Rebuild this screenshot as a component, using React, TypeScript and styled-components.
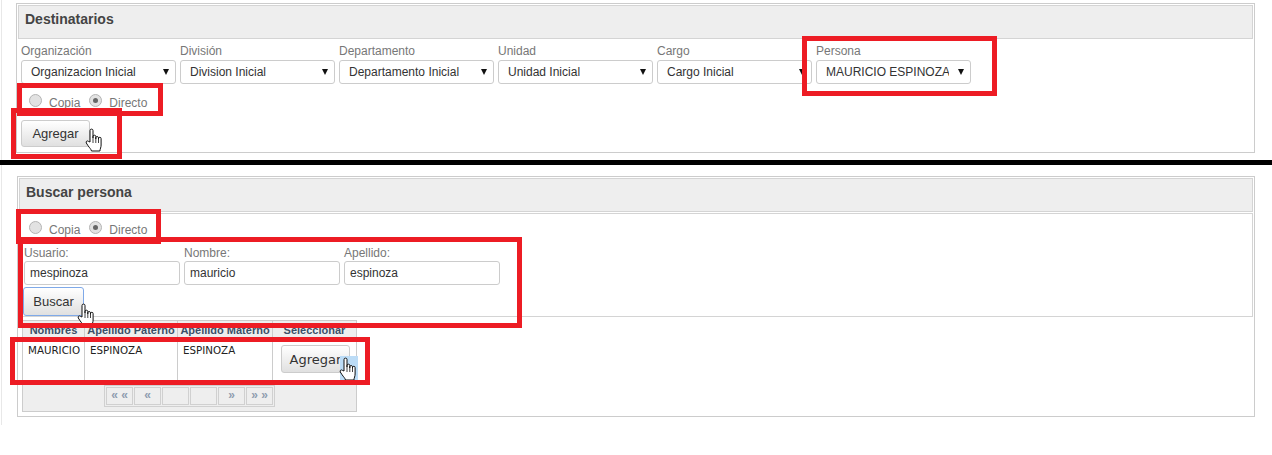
import React from 'react'
import styled, { createGlobalStyle } from 'styled-components'

const GlobalStyle = createGlobalStyle`
  body {
    margin: 0;
    background: #ffffff;
    font-family: "Liberation Sans", Arial, sans-serif;
  }
`

const Page = styled.div`
  position: relative;
  width: 1272px;
  height: 455px;
  overflow: hidden;
`

const Sheet = styled.div`
  margin-left: 1px;
  height: 425px;
  border-left: 1px solid #e8e8e8;
  padding: 3px 17px 0 14px;
  box-sizing: border-box;
`

const Panel = styled.section<{ $height: number; $top?: number; $left?: number }>`
  box-sizing: border-box;
  height: ${(p) => p.$height}px;
  margin: ${(p) => p.$top || 0}px 0 0 ${(p) => p.$left || 0}px;
  border: 1px solid #cccccc;
  padding: 1px;
`

const PanelHeader = styled.h2`
  box-sizing: border-box;
  height: 34px;
  margin: 0;
  padding: 5px 6px 0;
  background: #eeeeee;
  border: 1px solid #d4d4d4;
  font-size: 14px;
  line-height: 16px;
  font-weight: bold;
  color: #444444;
`

const SelectRow = styled.div`
  display: flex;
  gap: 4px;
  padding: 4px 0 0 3px;
`

const Field = styled.label<{ $line: number; $width: number }>`
  display: flex;
  flex-direction: column;
  width: ${(p) => p.$width}px;
  font-size: 12px;
  line-height: ${(p) => p.$line}px;
  color: #777777;
`

const Select = styled.div`
  box-sizing: border-box;
  display: flex;
  align-items: center;
  justify-content: space-between;
  height: 24px;
  padding: 0 6px 0 9px;
  background: #ffffff;
  border: 1px solid #cccccc;
  border-radius: 3px;
  font-size: 12px;
  color: #333333;
  white-space: nowrap;
  overflow: hidden;
`

const SelectValue = styled.span`
  max-width: 123px;
  overflow: hidden;
`

const Arrow = styled.span`
  width: 0;
  height: 0;
  flex: none;
  margin-bottom: 1px;
  border-left: 3.5px solid transparent;
  border-right: 3.5px solid transparent;
  border-top: 6px solid #111111;
`

const RadioRow = styled.div<{ $top: number; $left: number }>`
  display: flex;
  align-items: center;
  height: 16px;
  margin: ${(p) => p.$top}px 0 0 ${(p) => p.$left}px;
  font-size: 12px;
  color: #777777;
`

const Radio = styled.span<{ $checked?: boolean }>`
  box-sizing: border-box;
  display: flex;
  align-items: center;
  justify-content: center;
  width: 13px;
  height: 13px;
  margin-top: -6px;
  border: 1px solid #b4b4b4;
  border-radius: 50%;
  background: #e2e2e2;

  &::after {
    content: '';
    display: ${(p) => (p.$checked ? 'block' : 'none')};
    width: 5px;
    height: 5px;
    border-radius: 50%;
    background: #666666;
  }
`

const RadioText = styled.span<{ $after: number }>`
  margin: 0 ${(p) => p.$after}px 0 7px;
`

const Button = styled.button<{ $focus?: boolean }>`
  display: block;
  box-sizing: border-box;
  padding: 0;
  background: linear-gradient(to bottom, #ffffff, #e0e0e0);
  border: 1px solid ${(p) => (p.$focus ? '#7fa9e8' : '#cccccc')};
  border-radius: 3px;
  font-family: inherit;
  font-size: 13px;
  color: #333333;
`

const AddButton = styled(Button)`
  width: 69px;
  height: 27px;
  margin: 9px 0 0 3px;
`

const RowButton = styled(Button)`
  width: 69px;
  height: 28px;
`

const SearchButton = styled(Button)`
  width: 61px;
  height: 29px;
  margin: 2px 0 0 -1px;
`

const SearchBox = styled.div`
  box-sizing: border-box;
  height: 104px;
  margin-top: 1px;
  padding: 0 0 0 4px;
  border: 1px solid #d4d4d4;
`

const InputRow = styled.div`
  display: flex;
  gap: 4px;
  margin-top: 7px;
`

const TextInput = styled.div`
  box-sizing: border-box;
  height: 24px;
  padding: 0 5px;
  background: #ffffff;
  border: 1px solid #cccccc;
  border-radius: 3px;
  font-size: 12px;
  line-height: 22px;
  color: #333333;
`

const Grid = styled.div`
  box-sizing: border-box;
  width: 335px;
  height: 92px;
  margin: 3px 0 0 3px;
  background: #eeeeee;
  border: 1px solid #cccccc;
`

const GridRow = styled.div<{ $head?: boolean }>`
  display: grid;
  grid-template-columns: 62px 93px 95px 83px;
  height: ${(p) => (p.$head ? 17 : 45)}px;
  background: ${(p) => (p.$head ? '#eeeeee' : '#ffffff')};
`

const HeadCell = styled.div`
  box-sizing: border-box;
  border-right: 1px solid #cccccc;
  border-bottom: 1px solid #cccccc;
  font-size: 11px;
  line-height: 18px;
  font-weight: bold;
  color: #3a5068;
  text-align: center;
  white-space: nowrap;
  overflow: hidden;

  &:last-child {
    border-right: none;
  }
`

const Cell = styled.div`
  box-sizing: border-box;
  padding: 6px 0 0 5px;
  border-right: 1px solid #cccccc;
  font-family: "DejaVu Sans", Verdana, sans-serif;
  font-size: 10.3px;
  color: #222222;

  &:last-child {
    border-right: none;
    padding: 7px 0 0 8px;
  }
`

const Pager = styled.div`
  display: flex;
  gap: 1px;
  width: fit-content;
  margin: 2px 0 0 81px;
  padding: 1px;
  border: 1px solid #d0d0d0;
`

const PagerButton = styled.span`
  box-sizing: border-box;
  width: 27px;
  height: 18px;
  border: 1px solid #d0d0d0;
  font-size: 12px;
  font-weight: bold;
  line-height: 15px;
  text-align: center;
  color: #8f9db0;
`

const Divider = styled.div`
  position: absolute;
  left: 0;
  top: 160px;
  width: 1272px;
  height: 5px;
  background: #000000;
`

const RedBox = styled.div<{ $x: number; $y: number; $w: number; $h: number }>`
  position: absolute;
  box-sizing: border-box;
  left: ${(p) => p.$x}px;
  top: ${(p) => p.$y}px;
  width: ${(p) => p.$w}px;
  height: ${(p) => p.$h}px;
  border: 5px solid #ed1c24;
`

const HoverPatch = styled.div`
  position: absolute;
  left: 340px;
  top: 356px;
  width: 18px;
  height: 24px;
  background: #bcdcf6;
`

const CursorWrap = styled.svg<{ $x: number; $y: number }>`
  position: absolute;
  left: ${(p) => p.$x}px;
  top: ${(p) => p.$y}px;
`

const Cursor = ({ x, y }: { x: number; y: number }) => (
  <CursorWrap $x={x} $y={y} width='18' height='24' viewBox='0 0 18 24'>
    <path
      d='M5 14V2.6a1.5 1.5 0 0 1 3 0V10V8.6a1.4 1.4 0 0 1 2.8 0V11V9.6a1.4 1.4 0 0 1 2.7 0V11.5V10.6a1.3 1.3 0 0 1 2.6 0V17c0 2.5-1 3.6-1.2 6H6.5c-.4-1.8-2-3.2-3.4-5.2L1.3 15c-.8-1.5 1-2.8 2.2-1.6z'
      fill='#ffffff'
      stroke='#111111'
      strokeWidth='1'
      strokeLinejoin='round'
    />
    <path d='M8 10v5M10.8 11v4M13.5 11.5v3.5' stroke='#111111' strokeWidth='0.8' fill='none' />
  </CursorWrap>
)

const selects = [
  ['Organización', 'Organizacion Inicial'],
  ['División', 'Division Inicial'],
  ['Departamento', 'Departamento Inicial'],
  ['Unidad', 'Unidad Inicial'],
  ['Cargo', 'Cargo Inicial'],
  ['Persona', 'MAURICIO ESPINOZA'],
]

const searchFields = [
  ['Usuario:', 'mespinoza'],
  ['Nombre:', 'mauricio'],
  ['Apellido:', 'espinoza'],
]

const columns = ['Nombres', 'Apellido Paterno', 'Apellido Materno', 'Seleccionar']
const pagerLabels = ['« «', '«', '', '', '»', '» »']

const App = () => (
  <Page>
    <GlobalStyle />
    <Sheet>
      <Panel $height={150}>
        <PanelHeader>Destinatarios</PanelHeader>
        <SelectRow>
          {selects.map(([label, value]) => (
            <Field key={label} $line={17} $width={155}>
              {label}
              <Select>
                <SelectValue>{value}</SelectValue>
                <Arrow />
              </Select>
            </Field>
          ))}
        </SelectRow>
        <RadioRow $top={11} $left={11}>
          <Radio />
          <RadioText $after={9}>Copia</RadioText>
          <Radio $checked />
          <RadioText $after={0}>Directo</RadioText>
        </RadioRow>
        <AddButton>Agregar</AddButton>
      </Panel>
      <Panel $height={241} $top={23} $left={1}>
        <PanelHeader>Buscar persona</PanelHeader>
        <SearchBox>
          <RadioRow $top={8} $left={5}>
            <Radio />
            <RadioText $after={9}>Copia</RadioText>
            <Radio $checked />
            <RadioText $after={0}>Directo</RadioText>
          </RadioRow>
          <InputRow>
            {searchFields.map(([label, value]) => (
              <Field key={label} $line={16} $width={156}>
                {label}
                <TextInput>{value}</TextInput>
              </Field>
            ))}
          </InputRow>
          <SearchButton $focus>Buscar</SearchButton>
        </SearchBox>
        <Grid>
          <GridRow $head>
            {columns.map((c) => (
              <HeadCell key={c}>{c}</HeadCell>
            ))}
          </GridRow>
          <GridRow>
            <Cell>MAURICIO</Cell>
            <Cell>ESPINOZA</Cell>
            <Cell>ESPINOZA</Cell>
            <Cell>
              <RowButton>Agregar</RowButton>
            </Cell>
          </GridRow>
          <Pager>
            {pagerLabels.map((l, i) => (
              <PagerButton key={i}>{l}</PagerButton>
            ))}
          </Pager>
        </Grid>
      </Panel>
    </Sheet>
    <Divider />
    <HoverPatch />
    <Cursor x={85} y={128} />
    <Cursor x={77} y={303} />
    <Cursor x={339} y={357} />
    <RedBox $x={802} $y={36} $w={195} $h={60} />
    <RedBox $x={17} $y={83} $w={146} $h={33} />
    <RedBox $x={11} $y={108} $w={111} $h={51} />
    <RedBox $x={16} $y={209} $w={145} $h={35} />
    <RedBox $x={18} $y={237} $w={504} $h={91} />
    <RedBox $x={10} $y={337} $w={360} $h={48} />
  </Page>
)

export default App
